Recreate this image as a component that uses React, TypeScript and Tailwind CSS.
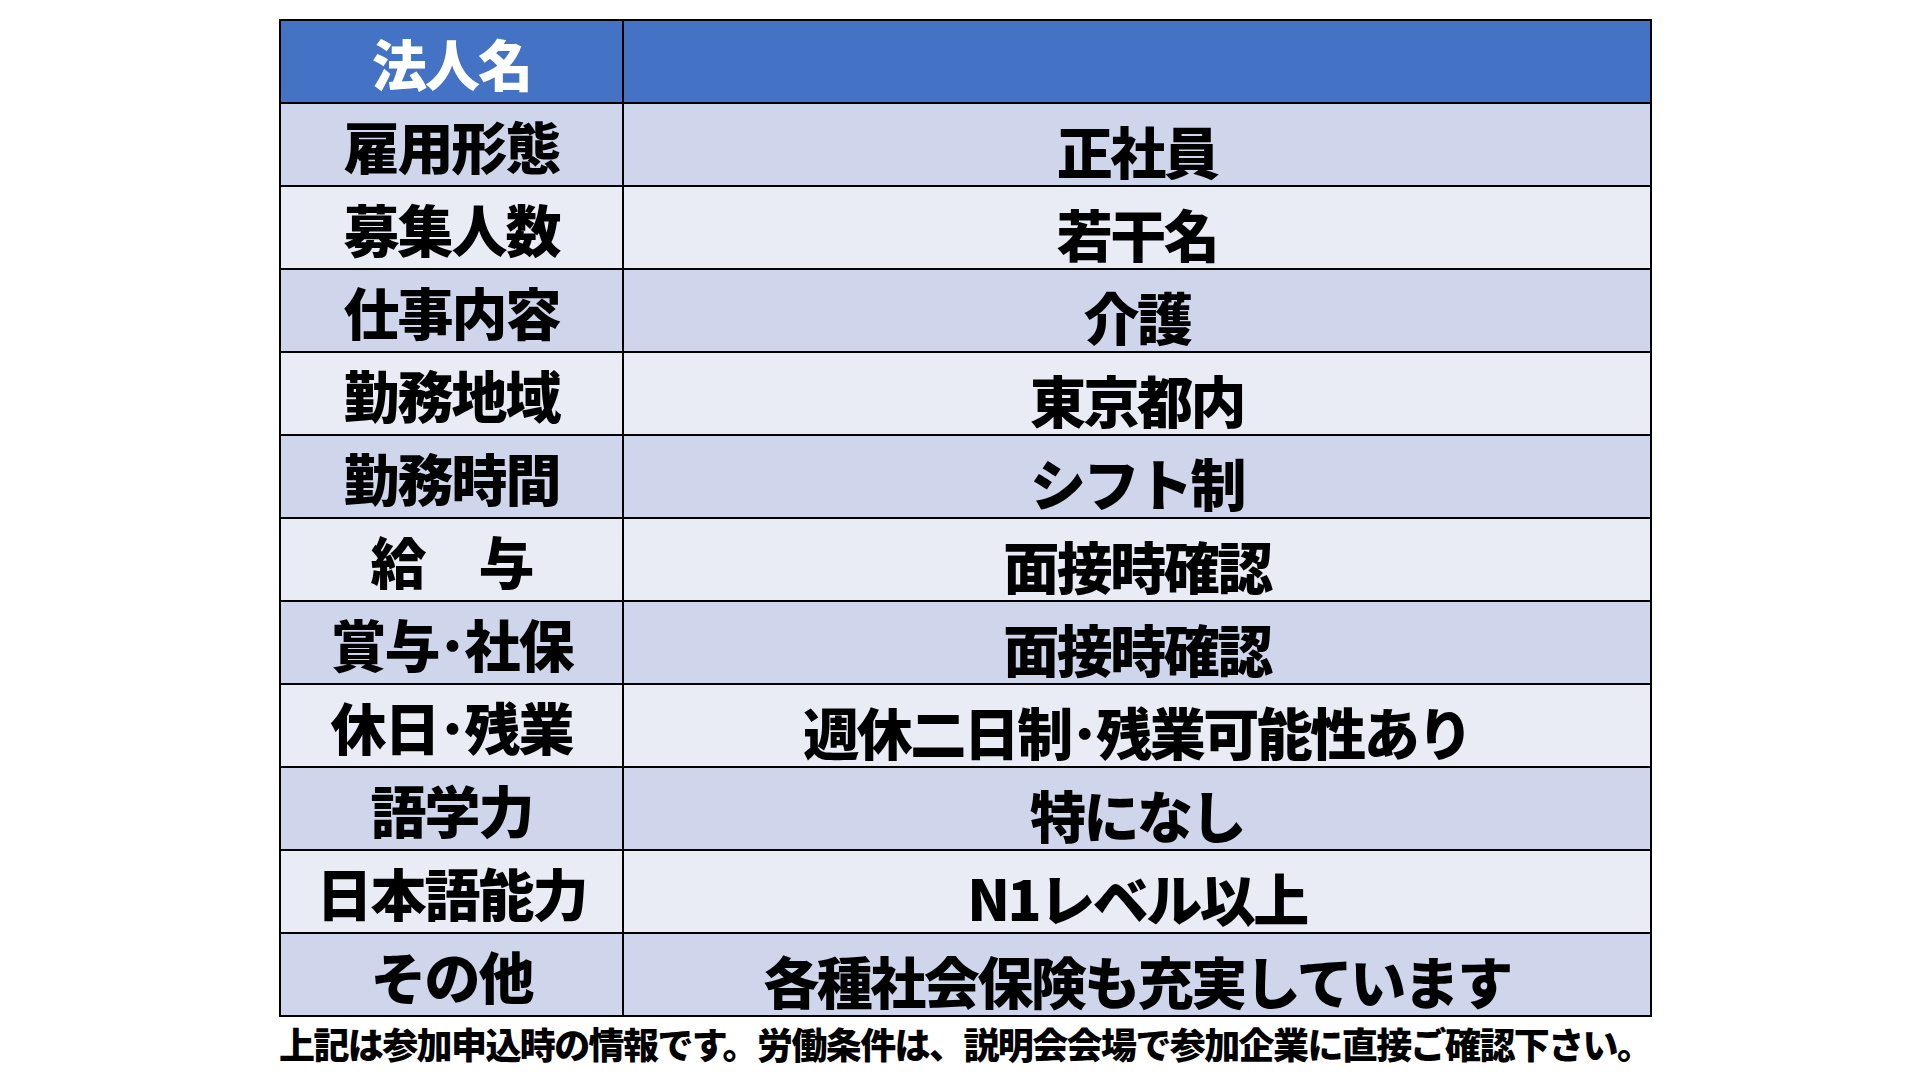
const rows: [string, string][] = [
  ["雇用形態", "正社員"],
  ["募集人数", "若干名"],
  ["仕事内容", "介護"],
  ["勤務地域", "東京都内"],
  ["勤務時間", "シフト制"],
  ["給　与", "面接時確認"],
  ["賞与･社保", "面接時確認"],
  ["休日･残業", "週休二日制･残業可能性あり"],
  ["語学力", "特になし"],
  ["日本語能力", "N1レベル以上"],
  ["その他", "各種社会保険も充実しています"],
];

export default function App() {
  return (
    <div
      className="w-[1920px] h-[1080px] bg-white overflow-hidden pt-[19px] pl-[279px] text-black"
      style={{ fontFamily: '"Noto Sans CJK JP", "Noto Sans", sans-serif' }}
    >
      <table className="w-[1373px] border-collapse border-2 border-black table-fixed">
        <colgroup>
          <col className="w-[343px]" />
          <col />
        </colgroup>
        <thead>
          <tr className="h-[83px] bg-[#4472c4]">
            <th className="border-2 border-black p-0 pt-[2px] text-center text-[55px] leading-none font-black tracking-[-2px] text-white">
              法人名
            </th>
            <th className="border-2 border-black p-0" />
          </tr>
        </thead>
        <tbody>
          {rows.map(([label, value], i) => (
            <tr
              key={label}
              className={`h-[83px] ${i % 2 === 0 ? "bg-[#cfd5ea]" : "bg-[#e9ebf5]"}`}
            >
              <td className="border-2 border-black p-0 pt-[1px] text-center text-[56px] leading-none font-black tracking-[-2px] whitespace-nowrap">
                {label}
              </td>
              <td className="border-2 border-black p-0 pt-[11px] text-center text-[56px] leading-none font-black tracking-[-2.5px] whitespace-nowrap">
                {value}
              </td>
            </tr>
          ))}
        </tbody>
      </table>
      <p className="mt-[8px] text-[36px] leading-none font-black tracking-[-1.6px] whitespace-nowrap">
        上記は参加申込時の情報です。労働条件は、説明会会場で参加企業に直接ご確認下さい。
      </p>
    </div>
  );
}
